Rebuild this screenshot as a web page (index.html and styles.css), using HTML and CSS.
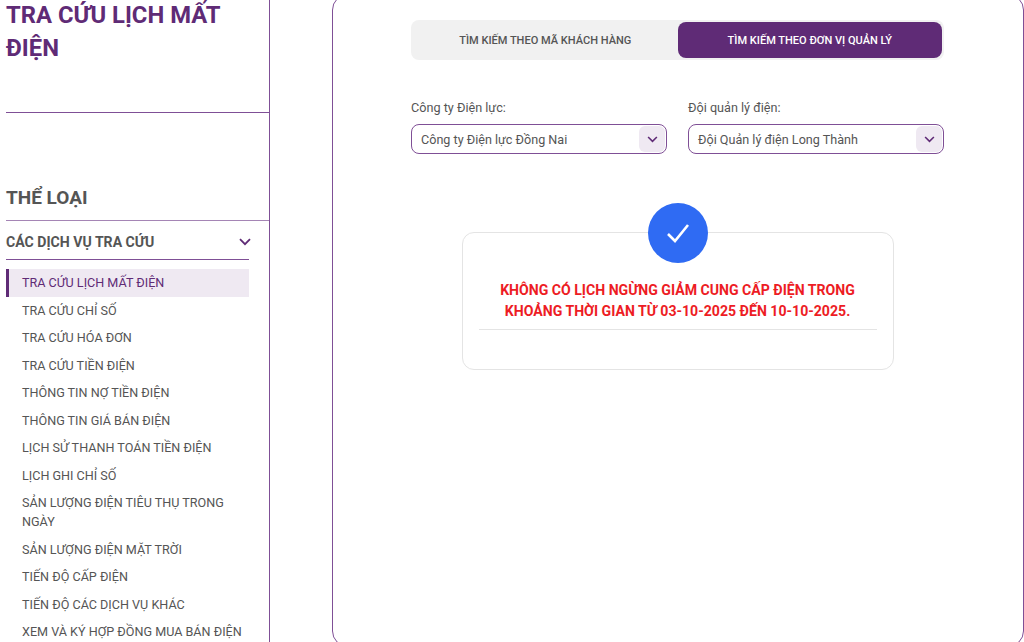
FILE: index.html
```html
<!DOCTYPE html>
<html lang="vi">
<head>
    <meta charset="UTF-8">
    <meta name="viewport" content="width=device-width, initial-scale=1.0">
    <title>Tra cứu lịch mất điện</title>
    <link rel="stylesheet" href="styles.css">
</head>
<body>
    <div class="page">
        <aside class="sidebar">
            <h1 class="page-title">TRA CỨU LỊCH MẤT ĐIỆN</h1>
            <h2 class="cat-title">THỂ LOẠI</h2>
            <div class="group-head">
                <span>CÁC DỊCH VỤ TRA CỨU</span>
                <svg class="group-arrow" viewBox="0 0 12 8" width="12" height="8"><path d="M1 1.2 6 6.2 11 1.2" fill="none" stroke="#5f2b76" stroke-width="1.8"/></svg>
            </div>
            <ul class="menu">
                <li class="active">TRA CỨU LỊCH MẤT ĐIỆN</li>
                <li>TRA CỨU CHỈ SỐ</li>
                <li>TRA CỨU HÓA ĐƠN</li>
                <li>TRA CỨU TIỀN ĐIỆN</li>
                <li>THÔNG TIN NỢ TIỀN ĐIỆN</li>
                <li>THÔNG TIN GIÁ BÁN ĐIỆN</li>
                <li>LỊCH SỬ THANH TOÁN TIỀN ĐIỆN</li>
                <li>LỊCH GHI CHỈ SỐ</li>
                <li>SẢN LƯỢNG ĐIỆN TIÊU THỤ TRONG NGÀY</li>
                <li>SẢN LƯỢNG ĐIỆN MẶT TRỜI</li>
                <li>TIẾN ĐỘ CẤP ĐIỆN</li>
                <li>TIẾN ĐỘ CÁC DỊCH VỤ KHÁC</li>
                <li>XEM VÀ KÝ HỢP ĐỒNG MUA BÁN ĐIỆN</li>
            </ul>
        </aside>
        <main class="content">
            <div class="tabs">
                <div class="tab">TÌM KIẾM THEO MÃ KHÁCH HÀNG</div>
                <div class="tab selected">TÌM KIẾM THEO ĐƠN VỊ QUẢN LÝ</div>
            </div>
            <div class="filters">
                <div class="field">
                    <label>Công ty Điện lực:</label>
                    <div class="select">
                        <span>Công ty Điện lực Đồng Nai</span>
                        <span class="select-btn"><svg viewBox="0 0 12 8" width="11" height="7"><path d="M1 1.2 6 6.2 11 1.2" fill="none" stroke="#5f2b76" stroke-width="1.8"/></svg></span>
                    </div>
                </div>
                <div class="field">
                    <label>Đội quản lý điện:</label>
                    <div class="select">
                        <span>Đội Quản lý điện Long Thành</span>
                        <span class="select-btn"><svg viewBox="0 0 12 8" width="11" height="7"><path d="M1 1.2 6 6.2 11 1.2" fill="none" stroke="#5f2b76" stroke-width="1.8"/></svg></span>
                    </div>
                </div>
            </div>
            <div class="notice">
                <div class="notice-icon"><svg viewBox="0 0 24 20" width="24" height="20"><path d="M2 11 9 18 22 2" fill="none" stroke="#fff" stroke-width="2.6"/></svg></div>
                <p class="notice-text">KHÔNG CÓ LỊCH NGỪNG GIẢM CUNG CẤP ĐIỆN TRONG KHOẢNG THỜI GIAN TỪ 03-10-2025 ĐẾN 10-10-2025.</p>
            </div>
        </main>
    </div>
</body>
</html>
```

FILE: styles.css
```css
*{
    margin: 0;
    padding: 0;
    box-sizing: border-box;
    font-family: Roboto, "Liberation Sans", sans-serif;
}
html, body{
    height: 100%;
    overflow: hidden;
    background-color: #fff;
}
.page{
    display: flex;
    height: 642px;
    overflow: hidden;
}
.sidebar{
    width: 270px;
    flex-shrink: 0;
    height: 642px;
    padding-left: 6px;
    border-right: 1px solid #7f4f96;
}
.page-title{
    height: 114px;
    margin-top: -1px;
    font-size: 23.8px;
    line-height: 33px;
    font-weight: 700;
    color: #5f2b76;
    border-bottom: 1px solid #7f4f96;
}
.cat-title{
    height: 108px;
    padding-top: 72px;
    font-size: 19px;
    line-height: 26px;
    font-weight: 700;
    color: #555;
    border-bottom: 1px solid #a585b5;
}
.group-head{
    display: flex;
    justify-content: space-between;
    align-items: center;
    width: 243px;
    height: 39px;
    padding-top: 3px;
    font-size: 14.1px;
    font-weight: 700;
    color: #555;
    border-bottom: 1px solid #7f4f96;
}
.group-arrow{
    margin-right: -2px;
}
.menu{
    list-style: none;
    width: 243px;
    margin-top: 9px;
}
.menu li{
    padding: 4px 0 4.5px 16px;
    font-size: 12.6px;
    line-height: 19px;
    color: #555;
}
.menu li.active{
    padding-left: 13px;
    color: #5f2b76;
    background-color: #efe9f2;
    border-left: 3px solid #5f2b76;
}
.content{
    width: 692px;
    height: 653px;
    margin-left: 62px;
    margin-top: -6px;
    padding: 25px 79px 0 78px;
    border: 1px solid #7f4f96;
    border-radius: 16px;
}
.tabs{
    display: flex;
    height: 40px;
    padding: 2px;
    background-color: #f1f1f1;
    border-radius: 8px;
}
.tab{
    flex: 1;
    display: flex;
    justify-content: center;
    align-items: center;
    font-size: 11.04px;
    font-weight: 500;
    color: #555;
    border-radius: 8px;
}
.tab.selected{
    color: #fff;
    background-color: #5f2b76;
}
.filters{
    display: flex;
    gap: 21px;
    margin-top: 39px;
}
.field{
    flex: 1;
}
.field label{
    display: block;
    font-size: 12.65px;
    line-height: 18px;
    color: #555;
    margin-bottom: 7px;
}
.select{
    display: flex;
    justify-content: space-between;
    align-items: center;
    height: 30px;
    padding: 0 1px 0 9px;
    font-size: 12.6px;
    color: #555;
    border: 1px solid #7f4f96;
    border-radius: 8px;
}
.select-btn{
    display: flex;
    justify-content: center;
    align-items: center;
    width: 26px;
    height: 26px;
    background-color: #efe9f2;
    border-radius: 6px;
}
.notice{
    position: relative;
    width: 432px;
    height: 138px;
    margin: 78px auto 0;
    padding: 47px 16px 0;
    border: 1px solid #e4e4e4;
    border-radius: 12px;
}
.notice-icon{
    position: absolute;
    top: -30px;
    left: 185px;
    display: flex;
    justify-content: center;
    align-items: center;
    width: 60px;
    height: 60px;
    background-color: #2f6bf3;
    border-radius: 50%;
}
.notice-text{
    padding-bottom: 7px;
    font-size: 14.1px;
    line-height: 21px;
    font-weight: 700;
    text-align: center;
    color: #ed1c24;
    border-bottom: 1px solid #e4e4e4;
}
```
